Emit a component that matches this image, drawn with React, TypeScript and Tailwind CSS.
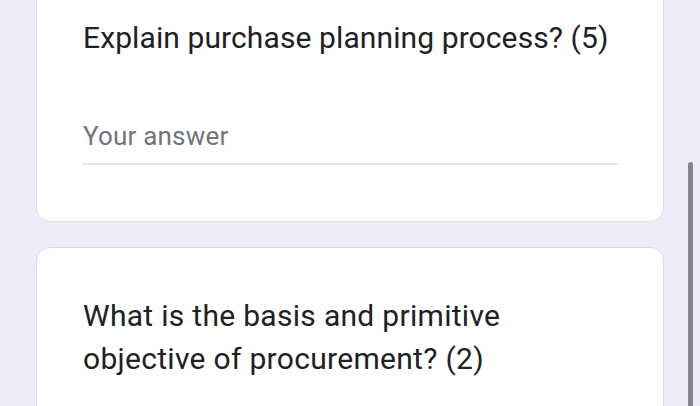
import React from "react";

export default function App() {
  return (
    <div
      className="relative w-[700px] h-[406px] overflow-hidden bg-[#edecf8]"
      style={{ fontFamily: "Roboto, 'Open Sans', sans-serif" }}
    >
      <div className="flex flex-col gap-[25px] pl-[36px] pr-[36px] -mt-[20px]">
        <div className="bg-white border border-[#dcdce4] rounded-[14px] pl-[46px] pr-[45px] pt-[39px] h-[242px]">
          <div className="text-[30px] leading-[36px] text-[#202124] tracking-[0.1px]">
            Explain purchase planning process? (5)
          </div>
          <div className="mt-[65px] text-[26px] leading-[30px] text-[#70757a] tracking-[0.2px]">Your answer</div>
          <div className="mt-[12px] h-[2px] bg-[#e6e6e9]" />
        </div>
        <div className="bg-white border border-[#dcdce4] rounded-[14px] pl-[46px] pr-[45px] pt-[46px] h-[200px]">
          <div className="text-[30px] leading-[43px] text-[#202124] tracking-[0.3px]">
            What is the basis and primitive
            <br />
            objective of procurement? (2)
          </div>
        </div>
      </div>
      <div className="absolute left-[688px] top-[162px] w-[5px] h-[260px] rounded-full bg-[#85858f]" />
    </div>
  );
}
